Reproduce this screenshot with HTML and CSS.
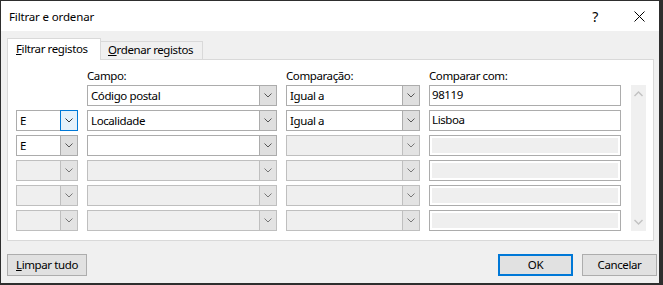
FILE: index.html
```html
<!DOCTYPE html>
<html lang="pt">
<head>
<meta charset="utf-8">
<title>Filtrar e ordenar</title>
<link rel="stylesheet" href="styles.css">
</head>
<body>
<div class="window">
  <div class="titlebar">
    <span class="title">Filtrar e ordenar</span>
    <span class="help">?</span>
    <span class="close"><svg width="11" height="11" viewBox="0 0 11 11"><path d="M0.5 0.5 L10.5 10.5 M10.5 0.5 L0.5 10.5" stroke="#000" stroke-width="1" fill="none"/></svg></span>
  </div>
  <div class="tabs">
    <div class="tab active"><u>F</u>iltrar registos</div>
    <div class="tab"><u>O</u>rdenar registos</div>
  </div>
  <div class="panel">
    <div class="grid">
      <div></div>
      <div class="label">Campo:</div>
      <div class="label">Comparação:</div>
      <div class="label">Comparar com:</div>
      <div></div>
      <div class="scroll">
        <svg width="9" height="6" viewBox="0 0 9 6"><path d="M0.5 5 L4.5 1 L8.5 5" stroke="#c2c2c2" stroke-width="1.4" fill="none"/></svg>
        <svg width="9" height="6" viewBox="0 0 9 6"><path d="M0.5 1 L4.5 5 L8.5 1" stroke="#c2c2c2" stroke-width="1.4" fill="none"/></svg>
      </div>

      <div class="blank"></div>
      <div class="combo"><span class="val">Código postal</span><span class="btn"><svg width="8" height="5" viewBox="0 0 8 5"><path d="M0.5 0.5 L4 4 L7.5 0.5" stroke="#555" fill="none"/></svg></span></div>
      <div class="combo"><span class="val">Igual a</span><span class="btn"><svg width="8" height="5" viewBox="0 0 8 5"><path d="M0.5 0.5 L4 4 L7.5 0.5" stroke="#555" fill="none"/></svg></span></div>
      <div class="tb">98119</div>

      <div class="combo focus"><span class="val">E</span><span class="btn"><svg width="8" height="5" viewBox="0 0 8 5"><path d="M0.5 0.5 L4 4 L7.5 0.5" stroke="#333" fill="none"/></svg></span></div>
      <div class="combo"><span class="val">Localidade</span><span class="btn"><svg width="8" height="5" viewBox="0 0 8 5"><path d="M0.5 0.5 L4 4 L7.5 0.5" stroke="#555" fill="none"/></svg></span></div>
      <div class="combo"><span class="val">Igual a</span><span class="btn"><svg width="8" height="5" viewBox="0 0 8 5"><path d="M0.5 0.5 L4 4 L7.5 0.5" stroke="#555" fill="none"/></svg></span></div>
      <div class="tb">Lisboa</div>

      <div class="combo"><span class="val">E</span><span class="btn"><svg width="8" height="5" viewBox="0 0 8 5"><path d="M0.5 0.5 L4 4 L7.5 0.5" stroke="#555" fill="none"/></svg></span></div>
      <div class="combo"><span class="val"></span><span class="btn"><svg width="8" height="5" viewBox="0 0 8 5"><path d="M0.5 0.5 L4 4 L7.5 0.5" stroke="#555" fill="none"/></svg></span></div>
      <div class="combo dis"><span class="val"></span><span class="btn"><svg width="8" height="5" viewBox="0 0 8 5"><path d="M0.5 0.5 L4 4 L7.5 0.5" stroke="#777" fill="none"/></svg></span></div>
      <div class="tb dis"></div>

      <div class="combo dis"><span class="val"></span><span class="btn"><svg width="8" height="5" viewBox="0 0 8 5"><path d="M0.5 0.5 L4 4 L7.5 0.5" stroke="#777" fill="none"/></svg></span></div>
      <div class="combo dis"><span class="val"></span><span class="btn"><svg width="8" height="5" viewBox="0 0 8 5"><path d="M0.5 0.5 L4 4 L7.5 0.5" stroke="#777" fill="none"/></svg></span></div>
      <div class="combo dis"><span class="val"></span><span class="btn"><svg width="8" height="5" viewBox="0 0 8 5"><path d="M0.5 0.5 L4 4 L7.5 0.5" stroke="#777" fill="none"/></svg></span></div>
      <div class="tb dis"></div>

      <div class="combo dis"><span class="val"></span><span class="btn"><svg width="8" height="5" viewBox="0 0 8 5"><path d="M0.5 0.5 L4 4 L7.5 0.5" stroke="#777" fill="none"/></svg></span></div>
      <div class="combo dis"><span class="val"></span><span class="btn"><svg width="8" height="5" viewBox="0 0 8 5"><path d="M0.5 0.5 L4 4 L7.5 0.5" stroke="#777" fill="none"/></svg></span></div>
      <div class="combo dis"><span class="val"></span><span class="btn"><svg width="8" height="5" viewBox="0 0 8 5"><path d="M0.5 0.5 L4 4 L7.5 0.5" stroke="#777" fill="none"/></svg></span></div>
      <div class="tb dis"></div>

      <div class="combo dis"><span class="val"></span><span class="btn"><svg width="8" height="5" viewBox="0 0 8 5"><path d="M0.5 0.5 L4 4 L7.5 0.5" stroke="#777" fill="none"/></svg></span></div>
      <div class="combo dis"><span class="val"></span><span class="btn"><svg width="8" height="5" viewBox="0 0 8 5"><path d="M0.5 0.5 L4 4 L7.5 0.5" stroke="#777" fill="none"/></svg></span></div>
      <div class="combo dis"><span class="val"></span><span class="btn"><svg width="8" height="5" viewBox="0 0 8 5"><path d="M0.5 0.5 L4 4 L7.5 0.5" stroke="#777" fill="none"/></svg></span></div>
      <div class="tb dis"></div>
    </div>
  </div>
  <div class="footer">
    <button class="button wide"><u>L</u>impar tudo</button>
    <span class="spacer"></span>
    <button class="button default">OK</button>
    <button class="button">Cancelar</button>
  </div>
</div>
</body>
</html>
```

FILE: styles.css
```css
* { box-sizing: border-box; }
html, body { margin: 0; padding: 0; background: #f0f0f0; }
body {
  font-family: "Segoe UI", "Noto Sans", "Open Sans", sans-serif;
  font-size: 11.5px;
  letter-spacing: -0.4px;
  color: #000;
}
.window {
  width: 663px;
  height: 285px;
  border-style: solid;
  border-color: #2e2e2e;
  border-width: 1px 4px 2px 1px;
  background: #f0f0f0;
  display: flex;
  flex-direction: column;
}
.titlebar {
  height: 30px;
  background: #fff;
  display: flex;
  align-items: center;
  padding-left: 8px;
  flex-shrink: 0;
}
.title { flex: 1; padding-top: 1px; letter-spacing: -0.15px; }
.help { font-size: 14px; margin-right: 36px; padding-top: 1px; }
.close { width: 11px; height: 11px; margin-right: 14px; display: flex; }

.tabs {
  margin-top: 7px;
  height: 21px;
  padding-left: 6px;
  display: flex;
  align-items: flex-end;
  flex-shrink: 0;
}
.tab {
  height: 18px;
  border: 1px solid #d9d9d9;
  border-bottom: none;
  border-left: none;
  padding: 0 6px 0 6px;
  line-height: 16px;
  background: #f0f0f0;
  white-space: nowrap;
}
.tab.active {
  height: 22px;
  margin-bottom: -1px;
  background: #fff;
  border-left: 1px solid #d9d9d9;
  border-right: 1px solid #d9d9d9;
  padding: 0 7px 0 8px;
  line-height: 19px;
  position: relative;
  z-index: 1;
  width: 94px;
}
.tab:not(.active) { width: 102px; padding-left: 7px; }

.panel {
  margin: 0 5px 0 6px;
  height: 182px;
  background: #fff;
  border: 1px solid #d9d9d9;
  padding: 10px 0 9px 8px;
  flex-shrink: 0;
}
.grid {
  display: grid;
  grid-template-columns: 62px 190px 134px 192px 16px;
  grid-template-rows: 11px repeat(6, 21px);
  column-gap: 9px;
  row-gap: 4px;
}
.label { line-height: 11px; white-space: nowrap; }
.scroll {
  grid-column: 5;
  grid-row: 2 / span 6;
  margin-left: 1px;
  background: #f0f0f0;
  display: flex;
  flex-direction: column;
  justify-content: space-between;
  align-items: center;
  padding: 6px 0 6px 0;
}
.combo {
  display: flex;
  height: 21px;
  border: 1px solid #acacac;
  background: #fff;
}
.combo .val {
  flex: 1;
  padding-left: 3px;
  line-height: 19px;
  white-space: nowrap;
  overflow: hidden;
}
.combo .btn {
  width: 18px;
  margin: -1px -1px -1px 0;
  border: 1px solid #acacac;
  background: #dfdfdf;
  display: flex;
  align-items: center;
  justify-content: center;
}
.combo.focus .btn {
  border-color: #0078d7;
  background: #e5f1fb;
}
.combo.dis { background: #efefef; border-color: #bfbfbf; }
.combo.dis .btn { border-color: #bfbfbf; background: #e3e3e3; }
.tb {
  height: 21px;
  border: 1px solid #acacac;
  background: #fff;
  padding-left: 2px;
  line-height: 17px;
}
.tb.dis {
  background: #efefef;
  box-shadow: inset 0 0 0 2px #fff;
}

.footer {
  margin-top: 13px;
  display: flex;
  padding: 0 2px 0 6px;
  column-gap: 9px;
}
.spacer { flex: 1; }
.button {
  font: inherit;
  letter-spacing: inherit;
  color: #000;
  height: 22px;
  width: 75px;
  padding: 0;
  margin: 0;
  border: 1px solid #adadad;
  background: #e1e1e1;
  line-height: 18px;
}
.button.wide { width: 80px; }
.button.default { border: 2px solid #0078d7; }
```
